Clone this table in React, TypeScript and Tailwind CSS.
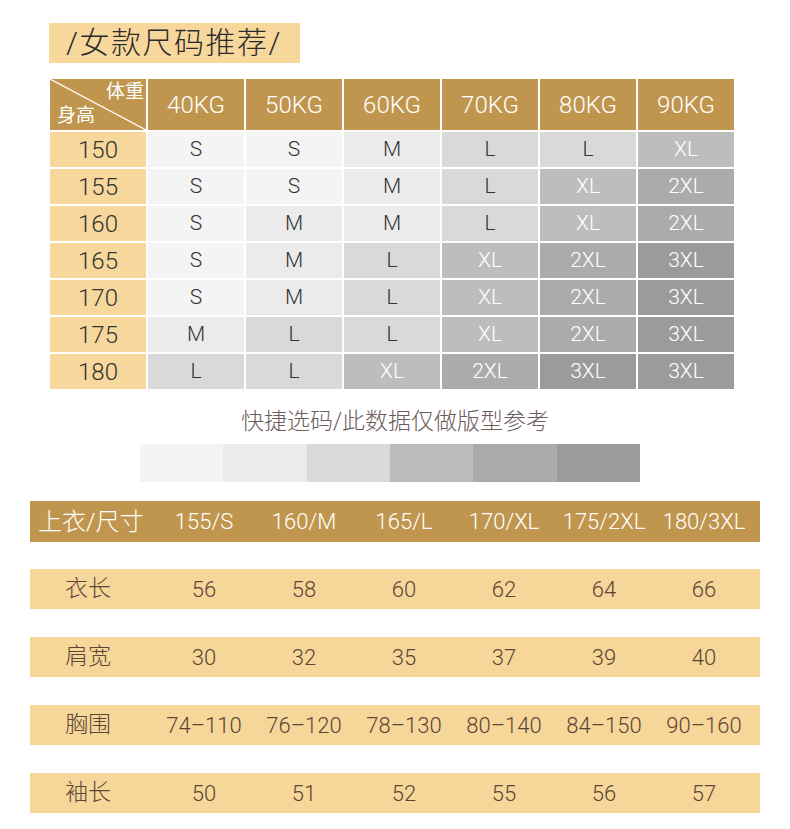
const weights = ["40KG", "50KG", "60KG", "70KG", "80KG", "90KG"];

const sizeChart: [string, string[]][] = [
  ["150", ["S", "S", "M", "L", "L", "XL"]],
  ["155", ["S", "S", "M", "L", "XL", "2XL"]],
  ["160", ["S", "M", "M", "L", "XL", "2XL"]],
  ["165", ["S", "M", "L", "XL", "2XL", "3XL"]],
  ["170", ["S", "M", "L", "XL", "2XL", "3XL"]],
  ["175", ["M", "L", "L", "XL", "2XL", "3XL"]],
  ["180", ["L", "L", "XL", "2XL", "3XL", "3XL"]],
];

const cellStyle: Record<string, string> = {
  S: "bg-[#f4f4f4] text-[#333333]",
  M: "bg-[#ebebeb] text-[#333333]",
  L: "bg-[#d9d9d9] text-[#333333]",
  XL: "bg-[#bdbdbd] text-white",
  "2XL": "bg-[#ababab] text-white",
  "3XL": "bg-[#9b9b9b] text-white",
};

const legend = [
  "bg-[#f4f4f4]",
  "bg-[#ebebeb]",
  "bg-[#d9d9d9]",
  "bg-[#bbbbbb]",
  "bg-[#aaaaaa]",
  "bg-[#9b9b9b]",
];

const shirtSizes = ["155/S", "160/M", "165/L", "170/XL", "175/2XL", "180/3XL"];

const measurements = [
  { name: "衣长", values: ["56", "58", "60", "62", "64", "66"] },
  { name: "肩宽", values: ["30", "32", "35", "37", "39", "40"] },
  { name: "胸围", values: ["74–110", "76–120", "78–130", "80–140", "84–150", "90–160"] },
  { name: "袖长", values: ["50", "51", "52", "55", "56", "57"] },
];

const App = () => {
  return (
    <div className="w-[790px] h-[829px] bg-white font-[Roboto,'Noto_Sans_CJK_SC',sans-serif] pt-[23px]">
      <div className="ml-[49px] w-[251px] h-[40px] bg-[#f7d79b] flex items-center pl-[17px]">
        <span className="text-[30px] font-light text-[#2b2b2b] leading-none tracking-[1.5px]">
          /女款尺码推荐/
        </span>
      </div>

      <div className="mt-[16px] ml-[50px] w-[684px] grid grid-cols-[repeat(7,96px)] grid-rows-[51px_repeat(7,35px)] gap-[2px]">
        <div className="relative bg-[#c0964f] overflow-hidden">
          <svg className="absolute inset-0" width="96" height="51" viewBox="0 0 96 51">
            <line x1="0" y1="0" x2="96" y2="51" stroke="white" strokeWidth="1.2" />
          </svg>
          <span className="absolute right-[2px] top-[3px] text-[19px] leading-none text-white">体重</span>
          <span className="absolute left-[7px] bottom-[5px] text-[19px] leading-none text-white">身高</span>
        </div>
        {weights.map((w) => (
          <div key={w} className="bg-[#c0964f] flex items-center justify-center text-[24px] font-light text-white">
            {w}
          </div>
        ))}
        {sizeChart.map(([height, sizes]) => (
          <>
            <div key={height} className="bg-[#f7d79b] flex items-center justify-center text-[24px] font-light text-[#333333]">
              {height}
            </div>
            {sizes.map((s, i) => (
              <div key={height + i} className={`${cellStyle[s]} flex items-center justify-center text-[21px] font-light`}>
                {s}
              </div>
            ))}
          </>
        ))}
      </div>

      <p className="mt-[18px] h-[30px] leading-[30px] text-center text-[23px] font-light text-[#6d5c5c]">
        快捷选码/此数据仅做版型参考
      </p>

      <div className="mt-[7px] ml-[140px] w-[500px] h-[38px] flex">
        {legend.map((c) => (
          <div key={c} className={`${c} flex-1`} />
        ))}
      </div>

      <div className="mt-[19px] ml-[30px] w-[730px] h-[41px] bg-[#c0964f] grid grid-cols-[124px_repeat(6,100px)] items-center text-white">
        <span className="pl-[8px] text-[24px] font-light">上衣/尺寸</span>
        {shirtSizes.map((s) => (
          <span key={s} className="text-center text-[22px] font-light">
            {s}
          </span>
        ))}
      </div>

      <div className="mt-[27px] ml-[30px] w-[730px] flex flex-col gap-[28px]">
        {measurements.map((m) => (
          <div key={m.name} className="h-[40px] bg-[#f7d69a] grid grid-cols-[124px_repeat(6,100px)] items-center text-[#5c4536]">
            <span className="pl-[35px] text-[23px] font-light">{m.name}</span>
            {m.values.map((v, i) => (
              <span key={i} className="text-center text-[22px] font-light">
                {v}
              </span>
            ))}
          </div>
        ))}
      </div>
    </div>
  );
};

export default App;
